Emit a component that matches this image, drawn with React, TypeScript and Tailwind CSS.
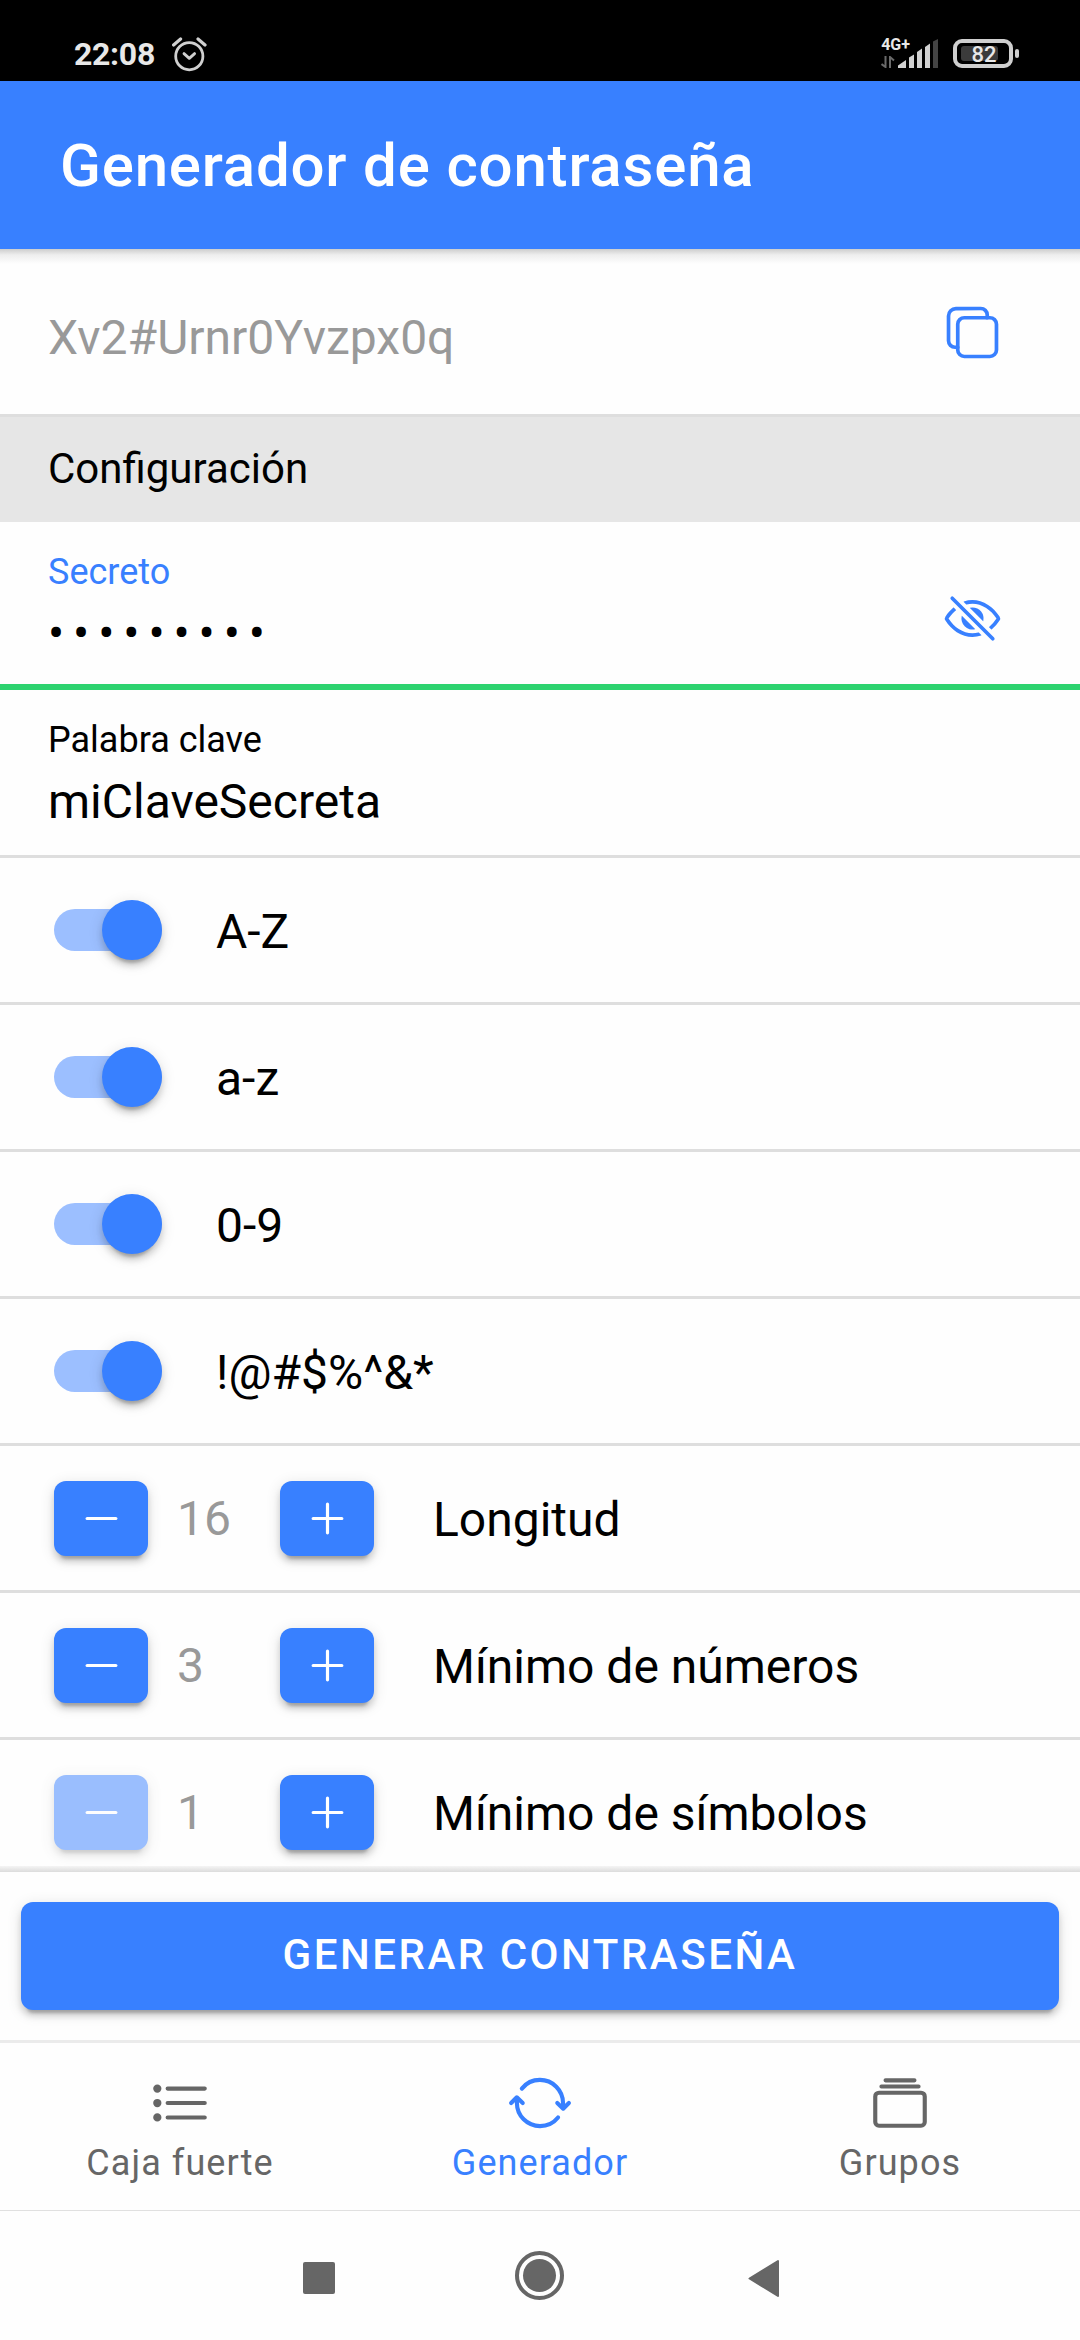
import type { ReactNode } from "react";
import {
  IoAddOutline,
  IoAlbumsOutline,
  IoCopyOutline,
  IoEyeOffOutline,
  IoListOutline,
  IoRemoveOutline,
  IoSyncOutline,
} from "react-icons/io5";

const toggles = ["A-Z", "a-z", "0-9", "!@#$%^&*"];

const counters = [
  { label: "Longitud", value: 16, atMinimum: false },
  { label: "Mínimo de números", value: 3, atMinimum: false },
  { label: "Mínimo de símbolos", value: 1, atMinimum: true },
];

function AlarmIcon() {
  return (
    <svg viewBox="0 0 36 36" className="h-9 w-9" fill="none" stroke="#d0d0d0" strokeWidth="2.8" strokeLinecap="round" strokeLinejoin="round">
      <circle cx="18.3" cy="20.2" r="13.6" />
      <path d="M13 17.6l5.3 4.8 5.3-4.8" />
      <path d="M2.6 9l7-6M34 9l-7-6" strokeWidth="3.2" />
    </svg>
  );
}

function SignalIcon() {
  return (
    <svg viewBox="0 0 40 30" className="h-[30px] w-10" fill="#d2d2d2">
      <path d="M0 28.5V26.5L8 21V29H0z" />
      <path d="M11 18.5l5-3V29h-5z" />
      <path d="M19 13l5-3.5V29h-5z" />
      <path d="M27 8l5-3.5V29h-5z" />
      <path d="M35 2.5L40 0V29h-5z" fill="#444" />
    </svg>
  );
}

function DataArrows() {
  return (
    <svg viewBox="0 0 14 12" className="h-3 w-3.5" fill="none" stroke="#6a6a6a" strokeWidth="2">
      <path d="M4.5 0v11L0.5 8M9 12V1l4 3.5" />
    </svg>
  );
}

function StatusBar() {
  return (
    <div className="flex h-[81px] items-start bg-black pl-[74px] text-[#e8e8e8]">
      <span className="mt-9 w-[82px] text-[32px] leading-9 font-bold tracking-[-0.3px]">22:08</span>
      <span className="mt-9 ml-[15px]">
        <AlarmIcon />
      </span>
      <div className="mt-[38px] ml-auto flex flex-col gap-1.5">
        <span className="h-3 text-[16px] leading-[14px] font-bold">4G+</span>
        <DataArrows />
      </div>
      <span className="mt-[39px] -ml-3">
        <SignalIcon />
      </span>
      <div className="relative mt-[39px] ml-[15px] flex h-[29px] w-[60px] items-center justify-center rounded-[9px] border-4 border-[#cfcfcf]">
        <div className="absolute top-[3px] left-1 h-[15px] w-[37px] rounded-[3px] bg-[#3b3b3b]" />
        <span className="relative mt-0.5 ml-0.5 text-[22px] leading-none font-medium">82</span>
      </div>
      <div className="mt-[49px] mr-[61px] ml-0.5 h-[9px] w-1 rounded-[2px] bg-[#cfcfcf]" />
    </div>
  );
}

function ToggleRow({ label }: { label: string }) {
  return (
    <div className="flex h-[147px] shrink-0 items-center border-b-3 border-[#dedede] pl-[54px]">
      <div className="flex h-[42px] w-[108px] items-center justify-end rounded-full bg-[#9cbfff]">
        <div className="h-[60px] w-[60px] shrink-0 rounded-full bg-[#3880ff] shadow-[0_9px_3px_-6px_rgba(0,0,0,.2),0_6px_6px_0_rgba(0,0,0,.14),0_3px_15px_0_rgba(0,0,0,.12)]" />
      </div>
      <span className="mt-[3px] ml-[54px] text-[48px] leading-none">{label}</span>
    </div>
  );
}

function StepButton({ children, disabled = false }: { children: ReactNode; disabled?: boolean }) {
  return (
    <button
      disabled={disabled}
      className="flex h-[75px] w-[94px] items-center justify-center rounded-xl bg-[#3880ff] text-[51px] text-white shadow-[0_9px_3px_-6px_rgba(0,0,0,.2),0_6px_6px_0_rgba(0,0,0,.14),0_3px_15px_0_rgba(0,0,0,.12)] disabled:opacity-50"
    >
      {children}
    </button>
  );
}

function CounterRow({ label, value, atMinimum }: { label: string; value: number; atMinimum: boolean }) {
  return (
    <div className="flex h-[147px] shrink-0 items-center border-b-3 border-[#dedede] pl-[54px]">
      <StepButton disabled={atMinimum}>
        <IoRemoveOutline />
      </StepButton>
      <span className="mt-0.5 ml-[29px] w-[103px] text-[48px] leading-none text-[#999]">{value}</span>
      <StepButton>
        <IoAddOutline />
      </StepButton>
      <span className="mt-[3px] ml-[59px] text-[48px] leading-none">{label}</span>
    </div>
  );
}

function Tab({ icon, label, active = false }: { icon: ReactNode; label: string; active?: boolean }) {
  return (
    <div className={active ? "flex flex-1 flex-col items-center text-[#3880ff]" : "flex flex-1 flex-col items-center text-[#666]"}>
      <span className="mt-[27px] text-[66px]">{icon}</span>
      <span className="mt-1.5 text-[36px] leading-[42px] tracking-[1.08px]">{label}</span>
    </div>
  );
}

export default function App() {
  return (
    <div className="flex h-[2340px] w-[1080px] flex-col overflow-hidden bg-[#fefefe] font-['Roboto',sans-serif] text-black">
      <StatusBar />
      <header className="flex h-[168px] items-center bg-[#3880ff] pt-0.5 pl-[60px]">
        <h1 className="text-[60px] leading-none font-medium tracking-[0.81px] text-white">Generador de contraseña</h1>
      </header>

      <main className="flex h-[1623px] flex-col overflow-hidden">
        <div className="h-[15px] shrink-0 bg-linear-to-b from-[#cdcdcd] via-[#eeeeee] via-40% to-[#fefefe]" />
        <div className="flex h-[153px] shrink-0 items-start justify-between border-b-3 border-[#dedede] pr-[78px] pl-12">
          <span className="mt-[50px] text-[48px] leading-none text-[#999]">Xv2#Urnr0Yvzpx0q</span>
          <IoCopyOutline className="mt-[39px] text-[59px] text-[#3880ff]" />
        </div>
        <div className="flex h-[105px] shrink-0 items-center bg-[#e6e6e6] pb-0.5 pl-12">
          <h2 className="text-[42px] leading-none">Configuración</h2>
        </div>
        <div className="flex h-[168px] shrink-0 justify-between border-b-6 border-[#2dd36f] pr-[78px] pl-12">
          <div className="flex flex-col">
            <label className="mt-[29px] text-[36px] leading-[42px] text-[#3880ff]">Secreto</label>
            <span className="mt-[13px] text-[48px] leading-[56px] tracking-[8.9px]">•••••••••</span>
          </div>
          <IoEyeOffOutline className="mt-[67px] text-[59px] text-[#3880ff]" />
        </div>
        <div className="flex h-[168px] shrink-0 flex-col border-b-3 border-[#dedede] pl-12">
          <label className="mt-[29px] text-[36px] leading-[42px]">Palabra clave</label>
          <span className="mt-[13px] text-[48px] leading-[56px]">miClaveSecreta</span>
        </div>
        {toggles.map((label) => (
          <ToggleRow key={label} label={label} />
        ))}
        {counters.map((counter) => (
          <CounterRow key={counter.label} {...counter} />
        ))}
      </main>

      <footer className="relative h-[168px] px-[21px] pt-[30px]">
        <div className="absolute inset-x-0 -top-1.5 h-1.5 bg-linear-to-b from-[#f5f5f5] to-[#dcdcdc]" />
        <button className="h-[108px] w-full rounded-xl bg-[#3880ff] pb-0.5 text-[42px] leading-none font-medium tracking-[2.52px] text-white shadow-[0_9px_3px_-6px_rgba(0,0,0,.2),0_6px_6px_0_rgba(0,0,0,.14),0_3px_15px_0_rgba(0,0,0,.12)]">
          GENERAR CONTRASEÑA
        </button>
      </footer>

      <nav className="flex h-[171px] border-t-3 border-b border-t-[#ebebeb] border-b-[#e0e0e0]">
        <Tab icon={<IoListOutline />} label="Caja fuerte" />
        <Tab icon={<IoSyncOutline />} label="Generador" active />
        <Tab icon={<IoAlbumsOutline />} label="Grupos" />
      </nav>

      <div className="flex flex-1 items-start pl-[303px]">
        <div className="mt-[51px] h-8 w-8 rounded-[2px] bg-[#666]" />
        <div className="mt-10 ml-[180px] flex h-[49px] w-[49px] items-center justify-center rounded-full border-4 border-[#666]">
          <div className="h-[33px] w-[33px] rounded-full bg-[#666]" />
        </div>
        <svg viewBox="0 0 32 38" className="mt-12 ml-[184px] h-[38px] w-8" fill="#666" stroke="#666" strokeWidth="2" strokeLinejoin="round">
          <path d="M1.5 19.5L30 2v35z" />
        </svg>
      </div>
    </div>
  );
}
